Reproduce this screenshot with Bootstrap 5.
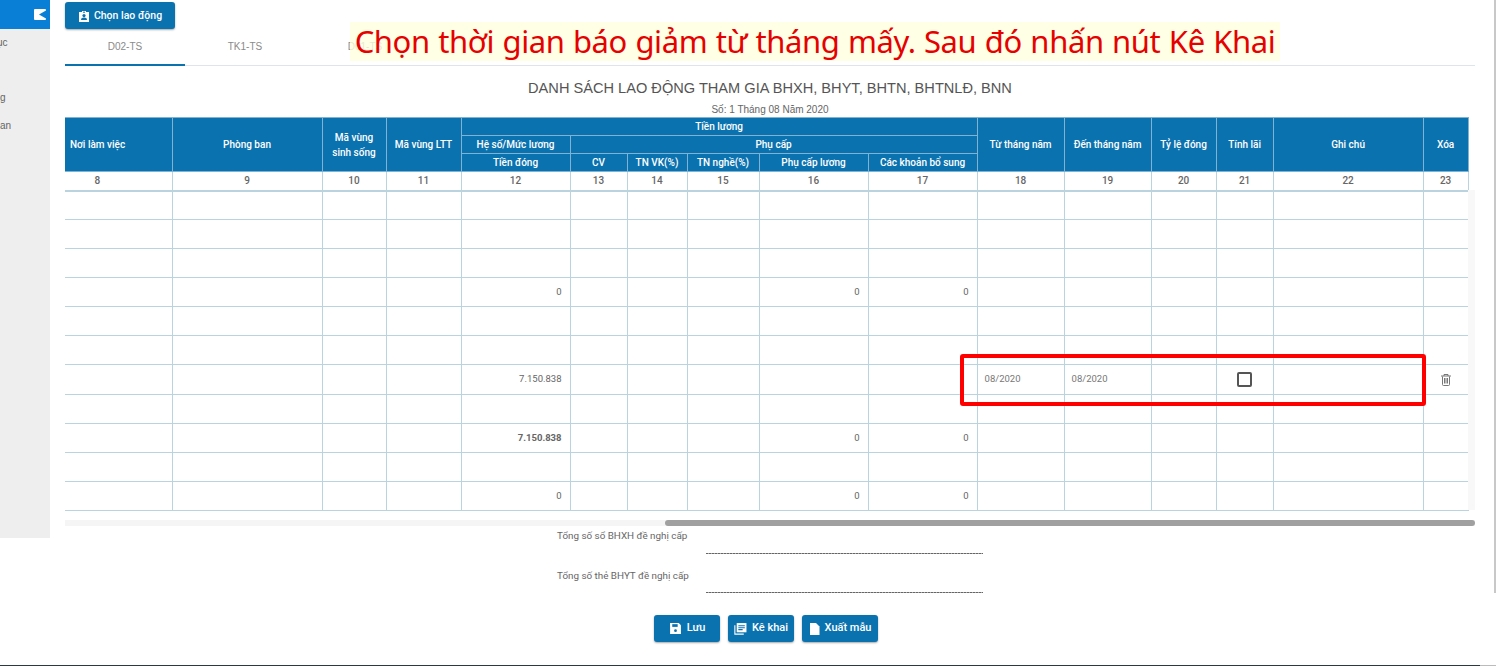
<!DOCTYPE html>
<html lang="vi">
<head>
<meta charset="utf-8">
<title>Kê khai</title>
<link rel="stylesheet" href="https://cdn.jsdelivr.net/npm/bootstrap@5.3.0/dist/css/bootstrap.min.css">
<style>
html,body{height:666px;overflow:hidden;background:#fff}
body{font-family:Roboto,"Liberation Sans",sans-serif;font-size:10px;color:#555;position:relative}
.page-wrap{height:665px}
.page-end{height:1px;background:linear-gradient(to right,#2b3a42 1480px,#bbb 1480px)}
.side-rail{width:50px;height:538px;background:#eee;flex:none;overflow:hidden;position:relative}
.side-top{height:29px;background:#0a7fd6}
.side-item{position:absolute;color:#666;font-family:"Liberation Sans",sans-serif;font-size:10px;line-height:12px}
.item-a{left:-3px;top:37px}
.item-b{left:0;top:92px}
.item-c{left:0;top:120px}
.main-pane{width:1410px;margin-left:15px;position:relative}
.act-btn{background:#0b72b0;color:#fff;border:0;border-radius:3px;font-size:11px;font-weight:500;height:27px;padding:0;box-shadow:0 1px 2px rgba(0,0,0,.35);display:inline-flex;align-items:center;justify-content:center;gap:5px}
.act-btn:hover{background:#0b72b0;color:#fff}
.btn-pick{width:110px;margin-top:2px;font-size:10.5px;gap:4px}
.tab-bar{height:35px;margin-top:2px;border-bottom:1px solid #dde5ea}
.tab-cell{width:120px;height:35px;line-height:31px;text-align:center;color:#8a8a8a;font-family:"Liberation Sans",sans-serif;font-size:10px;text-decoration:none}
.tab-cell:hover{color:#8a8a8a}
.tab-on{border-bottom:2px solid #0b72b0}
.doc-title{font-family:"Liberation Sans",sans-serif;font-size:14.6px;line-height:16px;color:#555;margin:14px 0 0;text-align:center;width:1410px;font-weight:400}
.doc-sub{font-family:"Liberation Sans",sans-serif;font-size:10px;line-height:12px;color:#666;text-align:center;margin-top:8px;height:13px}
.grid-wrap{width:1410px;height:393px;position:relative}
.grid-track{position:absolute;left:1403px;top:73px;width:7px;height:320px;background:#f8f8f8}
.data-grid{table-layout:fixed;border-collapse:collapse;width:1403px;margin:0;color:#555;font-size:10px}
.data-grid col:nth-child(1){width:107px}
.data-grid col:nth-child(2){width:150px}
.data-grid col:nth-child(3){width:64px}
.data-grid col:nth-child(4){width:75px}
.data-grid col:nth-child(5){width:109px}
.data-grid col:nth-child(6){width:57px}
.data-grid col:nth-child(7){width:60px}
.data-grid col:nth-child(8){width:72px}
.data-grid col:nth-child(9),.data-grid col:nth-child(10){width:109px}
.data-grid col:nth-child(11),.data-grid col:nth-child(12){width:87px}
.data-grid col:nth-child(13){width:65px}
.data-grid col:nth-child(14){width:57px}
.data-grid col:nth-child(15){width:150px}
.data-grid col:nth-child(16){width:45px}
.data-grid th,.data-grid td{border:1px solid #b9d3df;padding:0;vertical-align:middle}
.data-grid th{background:#0b72b0;color:#fff;text-align:center;font-weight:500;border-color:#7fb3d3;line-height:15px;height:18px}
.data-grid th:first-child,.data-grid td:first-child{border-left:0}
.data-grid th.head-first{text-align:left;padding-left:5px}
.data-grid .nums td{height:19px;text-align:center;font-weight:500;color:#666;border-top:0;border-bottom:2px solid #b9d3df}
.data-grid .nums td:first-child{padding-right:42px}
.data-grid tbody.rows td{height:29px;text-align:right;padding-right:8px;color:#666;font-size:9.5px}
.data-grid tbody.rows tr.tall-row td{height:30px}
.data-grid tbody.rows td.date-cell{text-align:left;padding:0 0 0 7px;color:#777}
.data-grid tbody.rows td.mid-cell{text-align:center;padding:0}
.strong-num{font-weight:700}
.tick-box{display:inline-block;width:15px;height:15px;border:2px solid #555;border-radius:2px;vertical-align:middle}
.h-track{height:6px;background:#f5f5f5;margin-top:10px;position:relative}
.h-thumb{position:absolute;left:600px;right:0;top:0;bottom:0;background:#a0a0a0;border-radius:3px}
.sum-line{position:relative;height:39px}
.sum-label{position:absolute;left:492px;top:4px;font-size:9.85px;line-height:12px;color:#666}
.sum-line+.sum-line .sum-label{top:5px}
.sum-rule{position:absolute;left:641px;top:27px;width:277px;height:1px;background:repeating-linear-gradient(90deg,#666 0 2px,#aaa 2px 3px)}
.foot-btns{margin-top:11px;gap:8px;padding-right:8px}
.btn-save,.btn-declare{width:66px}
.btn-export{width:76px}
.red-box{position:absolute;left:960px;top:354px;width:466px;height:52px;border:4px solid #f00;border-radius:3px;pointer-events:none}
.note-text{position:absolute;left:350px;top:22px;width:930px;height:39px;background:rgba(255,255,224,.8);color:#e60000;font-family:"Noto Sans",sans-serif;font-size:31px;line-height:39px;letter-spacing:-.4px;word-spacing:.8px;text-align:center;white-space:nowrap}
.page-bar{position:absolute;right:0;top:0;width:2px;height:593px;background:#c8c8c8}
</style>
</head>
<body>
<div class="page-wrap d-flex">
  <aside class="side-rail">
    <div class="side-top d-flex justify-content-end align-items-center pe-1">
      <svg width="12" height="11" viewBox="0 0 12 11"><path fill="#fff" d="M1 0h10a1 1 0 0 1 1 1v9a1 1 0 0 1-1 1H1a1 1 0 0 1-1-1V1a1 1 0 0 1 1-1z"/><path fill="#0a7fd6" d="M12 1.500v8L5 5.500z"/></svg>
    </div>
    <span class="side-item item-a">ục</span>
    <span class="side-item item-b">g</span>
    <span class="side-item item-c">an</span>
  </aside>
  <main class="main-pane">
    <button class="btn act-btn btn-pick" type="button">
      <svg width="12" height="12" viewBox="0 0 12 12"><path fill="#fff" d="M1 2h3V1h4v1h3v10H1z"/><circle cx="6" cy="5.600" r="1.600" fill="#0b72b0"/><path fill="#0b72b0" d="M3 10c0-2 1.300-2.600 3-2.600s3 .6 3 2.600z"/><rect x="5" y="1.700" width="2" height="1" fill="#0b72b0"/></svg>
      Chọn lao động
    </button>
    <nav class="tab-bar d-flex">
      <a class="tab-cell tab-on" href="#">D02-TS</a>
      <a class="tab-cell" href="#">TK1-TS</a>
      <a class="tab-cell" href="#">D01-TS</a>
    </nav>
    <h1 class="doc-title">DANH SÁCH LAO ĐỘNG THAM GIA BHXH, BHYT, BHTN, BHTNLĐ, BNN</h1>
    <div class="doc-sub">Số: 1 Tháng 08 Năm 2020</div>
    <div class="grid-wrap">
      <div class="grid-track"></div>
      <table class="data-grid">
        <colgroup>
          <col><col><col><col><col><col><col><col><col><col><col><col><col><col><col><col>
        </colgroup>
        <thead>
          <tr>
            <th rowspan="3" class="head-first">Nơi làm việc</th>
            <th rowspan="3">Phòng ban</th>
            <th rowspan="3">Mã vùng<br>sinh sống</th>
            <th rowspan="3">Mã vùng LTT</th>
            <th colspan="6">Tiền lương</th>
            <th rowspan="3">Từ tháng năm</th>
            <th rowspan="3">Đến tháng năm</th>
            <th rowspan="3">Tỷ lệ đóng</th>
            <th rowspan="3">Tính lãi</th>
            <th rowspan="3">Ghi chú</th>
            <th rowspan="3">Xóa</th>
          </tr>
          <tr><th>Hệ số/Mức lương</th><th colspan="5">Phụ cấp</th></tr>
          <tr><th>Tiền đóng</th><th>CV</th><th>TN VK(%)</th><th>TN nghề(%)</th><th>Phụ cấp lương</th><th>Các khoản bổ sung</th></tr>
        </thead>
        <tbody>
          <tr class="nums"><td>8</td><td>9</td><td>10</td><td>11</td><td>12</td><td>13</td><td>14</td><td>15</td><td>16</td><td>17</td><td>18</td><td>19</td><td>20</td><td>21</td><td>22</td><td>23</td></tr>
        </tbody>
        <tbody class="rows">
          <tr><td></td><td></td><td></td><td></td><td></td><td></td><td></td><td></td><td></td><td></td><td></td><td></td><td></td><td></td><td></td><td></td></tr>
          <tr><td></td><td></td><td></td><td></td><td></td><td></td><td></td><td></td><td></td><td></td><td></td><td></td><td></td><td></td><td></td><td></td></tr>
          <tr><td></td><td></td><td></td><td></td><td></td><td></td><td></td><td></td><td></td><td></td><td></td><td></td><td></td><td></td><td></td><td></td></tr>
          <tr><td></td><td></td><td></td><td></td><td>0</td><td></td><td></td><td></td><td>0</td><td>0</td><td></td><td></td><td></td><td></td><td></td><td></td></tr>
          <tr><td></td><td></td><td></td><td></td><td></td><td></td><td></td><td></td><td></td><td></td><td></td><td></td><td></td><td></td><td></td><td></td></tr>
          <tr><td></td><td></td><td></td><td></td><td></td><td></td><td></td><td></td><td></td><td></td><td></td><td></td><td></td><td></td><td></td><td></td></tr>
          <tr class="tall-row"><td></td><td></td><td></td><td></td><td>7.150.838</td><td></td><td></td><td></td><td></td><td></td><td class="date-cell">08/2020</td><td class="date-cell">08/2020</td><td></td><td class="mid-cell"><span class="tick-box"></span></td><td></td><td class="mid-cell"><svg width="12" height="13" viewBox="0 0 12 13"><path fill="none" stroke="#777" d="M2.500 3.500v8a1 1 0 0 0 1 1h5a1 1 0 0 0 1-1v-8M1 3h10M4 3V1.500h4V3M4.500 5v5.500M6 5v5.500M7.500 5v5.500"/></svg></td></tr>
          <tr><td></td><td></td><td></td><td></td><td></td><td></td><td></td><td></td><td></td><td></td><td></td><td></td><td></td><td></td><td></td><td></td></tr>
          <tr><td></td><td></td><td></td><td></td><td class="strong-num">7.150.838</td><td></td><td></td><td></td><td>0</td><td>0</td><td></td><td></td><td></td><td></td><td></td><td></td></tr>
          <tr><td></td><td></td><td></td><td></td><td></td><td></td><td></td><td></td><td></td><td></td><td></td><td></td><td></td><td></td><td></td><td></td></tr>
          <tr><td></td><td></td><td></td><td></td><td>0</td><td></td><td></td><td></td><td>0</td><td>0</td><td></td><td></td><td></td><td></td><td></td><td></td></tr>
        </tbody>
      </table>
    </div>
    <div class="h-track"><div class="h-thumb"></div></div>
    <div class="sum-line"><span class="sum-label">Tổng số sổ BHXH đề nghị cấp</span><span class="sum-rule"></span></div>
    <div class="sum-line"><span class="sum-label">Tổng số thẻ BHYT đề nghị cấp</span><span class="sum-rule"></span></div>
    <div class="foot-btns d-flex justify-content-center">
      <button class="btn act-btn btn-save" type="button"><svg width="13" height="13" viewBox="0 0 12 12"><path fill="#fff" d="M1 1h8l2 2v8H1z"/><rect x="3" y="2" width="5" height="2.500" fill="#0b72b0"/><circle cx="6" cy="8" r="1.300" fill="#0b72b0"/></svg>Lưu</button>
      <button class="btn act-btn btn-declare" type="button"><svg width="13" height="13" viewBox="0 0 12 12"><path fill="none" stroke="#fff" d="M.8 3v8.200H9"/><path fill="#fff" d="M2.500 1h9v8.500h-9z"/><path stroke="#0b72b0" d="M4 3.500h6M4 5.300h6M4 7h4"/></svg>Kê khai</button>
      <button class="btn act-btn btn-export" type="button"><svg width="11" height="14" viewBox="0 0 11 13"><path fill="#fff" d="M1 .5h6l3.500 3.500v8.500H1z"/></svg>Xuất mẫu</button>
    </div>
  </main>
</div>
<div class="page-end"></div>
<div class="page-bar"></div>
<div class="note-text">Chọn thời gian báo giảm từ tháng mấy. Sau đó nhấn nút Kê Khai</div>
<div class="red-box"></div>
</body>
</html>
